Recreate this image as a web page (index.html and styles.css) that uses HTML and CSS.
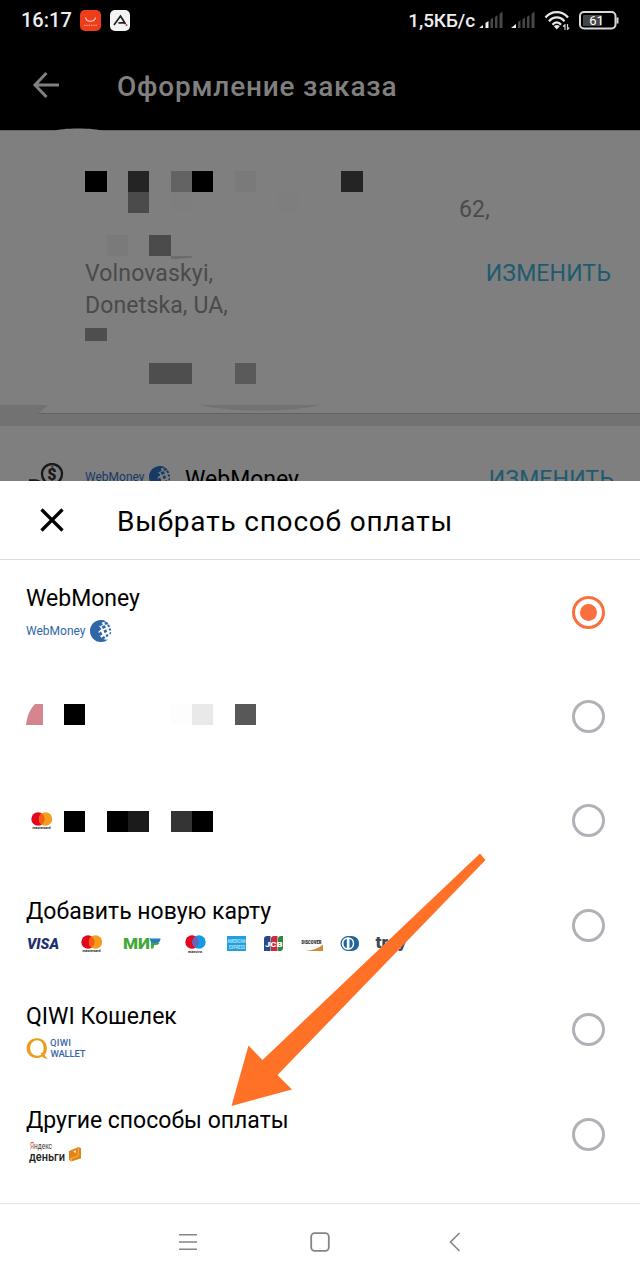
FILE: index.html
```html
<!DOCTYPE html>
<html lang="ru">
<head>
    <meta charset="UTF-8">
    <meta name="viewport" content="width=device-width, initial-scale=1.0">
    <title>Оформление заказа</title>
    <link rel="stylesheet" href="styles.css">
</head>
<body>
    <svg class="defs" width="0" height="0">
        <symbol id="globe" viewBox="0 0 22 22">
            <path d="M11 0C4.500 0 0 5 0 11s4.500 11 11 11c3 0 5-.8 7-2.500-5 1-9.500-3-9.500-9S12 1 17 2C15.500.8 13 0 11 0z" fill="currentColor"/>
            <g fill="currentColor">
                <path d="M11 0l3 .5-2 2-3-.5zM8 4l3-1.500 2 2-3 2zM14 2.500l3-.5 1.500 2-3 1zM6.500 9l3-2.500 2 2.500-3 2.500zM11.500 6.500l3-1.500 1.500 2.500-3 1.500zM17 5l2-.5 1.300 2-2 .7zM8 13.500l3-2 1.500 3-2.500 1.500zM13.500 10.500l2.700-1.200 1 2.700-2.700 1zM18.500 8.700l2-.5.8 2-2 .5zM11.500 17.500l2.500-1.500 1.500 2-2.500 1.500zM15.500 15l2.300-1 .7 2-2 1.200zM19.400 12.500l1.700-.6-.2 2-1.300.6zM8 19l3-.5 3 2.500-5 .5z"/>
            </g>
        </symbol>
        <symbol id="mastercard" viewBox="0 0 22 18">
            <circle cx="7" cy="7" r="6.700" fill="#e3061c"/>
            <circle cx="14.500" cy="7" r="6.700" fill="#f59b1e"/>
            <path d="M10.750 1.500a6.700 6.700 0 0 1 0 11 6.700 6.700 0 0 1 0-11z" fill="#f2600f"/>
            <text x="1.500" y="17" font-size="3.600" font-weight="700" textLength="18" fill="#222">mastercard</text>
        </symbol>
    </svg>

    <div class="status-bar">
        <span class="time">16:17</span>
        <svg class="app-icon" width="21" height="21" viewBox="0 0 21 21">
            <rect width="21" height="21" rx="5" fill="#ee3d1b"/>
            <path d="M5.500 7.500c1 5 9 5 10 0" fill="none" stroke="#ffd9ca" stroke-width="1.200"/>
            <path d="M4 15.300h13" stroke="#ffb49d" stroke-width="1" stroke-dasharray="1.500 .8"/>
        </svg>
        <svg class="app-icon" width="20" height="21" viewBox="0 0 20 21">
            <rect width="20" height="21" rx="5" fill="#f4f4f4"/>
            <path d="M4 15L10.500 6 15.500 14M8.500 12.800h6" fill="none" stroke="#222" stroke-width="1.700"/>
            <circle cx="16.500" cy="15" r="1" fill="#e33"/>
        </svg>
        <span class="speed">1,5КБ/с</span>
        <svg class="signal" width="24" height="18" viewBox="0 0 24 18">
            <path d="M0 17l4-3v3zM6.500 17v-5l3-2v7z" fill="#eee"/>
            <path d="M11.500 17V8.500l2.500-2V17zM16 17V6l2.500-2v13zM20.500 17V3L23.500.5V17z" fill="#474747"/>
        </svg>
        <svg class="signal" width="24" height="18" viewBox="0 0 24 18">
            <path d="M0 17l5-4v4z" fill="#eee"/>
            <path d="M7 17v-6l2.500-2v8zM11.500 17V8.500l2.500-2V17zM16 17V6l2.500-2v13zM20.500 17V3L23.500.5V17z" fill="#474747"/>
        </svg>
        <svg class="wifi" width="26" height="21" viewBox="0 0 26 21">
            <path d="M1.500 7.500c6-7.300 16.500-7.300 22.500 0M5 11.200c4.500-5 11-5 15.500 0M8.500 14.700c2.500-3 6-3 8.500 0" fill="none" stroke="#e8e8e8" stroke-width="2.300"/>
            <path d="M9.800 16.200c2-1.700 4-1.700 6 0l-3 3.300z" fill="#e8e8e8"/>
            <path d="M21 14v6M19 16.500l2-2M23.500 14v6M23.500 19.500l1.700-2" stroke="#ccc" stroke-width="1.200" fill="none"/>
        </svg>
        <svg class="battery" width="40" height="19" viewBox="0 0 40 19">
            <rect x="1" y="1" width="35.500" height="16.500" rx="4" fill="none" stroke="#d8d8d8" stroke-width="2"/>
            <rect x="4" y="4" width="19" height="11" rx="1" fill="#454545"/>
            <path d="M38.500 6.500v6" stroke="#d8d8d8" stroke-width="2"/>
            <text x="17.500" y="14" font-size="13" font-weight="400" text-anchor="middle" fill="#fff">61</text>
        </svg>
    </div>

    <div class="header">
        <svg class="back" width="28" height="28" viewBox="0 0 28 28">
            <path d="M14.500 2L3 14l11.500 12M3 14h24" fill="none" stroke="#808080" stroke-width="3"/>
        </svg>
        <h1>Оформление заказа</h1>
    </div>

    <div class="checkout">
        <div class="address">
            <div class="address-text">
                <p class="house">62,</p>
                <p class="street">Volnovaskyi,</p>
                <p>Donetska, UA,</p>
            </div>
            <a class="change">ИЗМЕНИТЬ</a>
        </div>
        <div class="payment">
            <svg class="money" width="36" height="34" viewBox="0 0 36 34">
                <circle cx="24" cy="11" r="10" fill="none" stroke="#1a1a1a" stroke-width="2.300"/>
                <text x="24" y="16.500" font-size="16" font-weight="900" text-anchor="middle" fill="#1a1a1a">$</text>
                <path d="M1 17.500h7c3 0 4 3 8 3h5" fill="none" stroke="#1a1a1a" stroke-width="2.500"/>
            </svg>
            <div class="webmoney dim"><span>WebMoney</span><svg width="22" height="22"><use href="#globe"/></svg></div>
            <span class="payment-name">WebMoney</span>
            <a class="change">ИЗМЕНИТЬ</a>
        </div>
        <!-- hidden personal data -->
        <svg class="mask" width="640" height="355" viewBox="0 126 640 355">
            <path d="M54 131c6-3.500 42-3.500 49 0z" fill="#7f7f7f"/>
            <path d="M0 405h48l-10 9v12H0zM200 405h120c-25 7-90 8-120 0z" fill="#727272"/>
            <g shape-rendering="crispEdges">
                <path d="M85 171h22v21h-22zM192 171h21v21h-21z" fill="#000"/>
                <path d="M128 171h21v21h-21zM341 171h22v21h-22z" fill="#242424"/>
                <path d="M171 171h21v21h-21z" fill="#636363"/>
                <path d="M235 171h21v21h-21zM107 235h21v21h-21z" fill="#7a7a7a"/>
                <path d="M171 192h21v19h-21zM277 192h22v20h-22z" fill="#7e7e7e"/>
                <path d="M128 192h21v21h-21zM149 235h22v21h-22z" fill="#4b4b4b"/>
                <path d="M85 328h22v13H85zM149 363h43v21h-43z" fill="#4e4e4e"/>
                <path d="M235 363h21v21h-21z" fill="#5a5a5a"/>
            </g>
            <path d="M171 256h21v1.500l-15 1.500h-6z" fill="#6c6c6c"/>
        </svg>
    </div>

    <div class="sheet">
        <div class="sheet-header">
            <svg class="close" width="24" height="24" viewBox="0 0 24 24">
                <path d="M1.500 1.500l21 21M22.500 1.500l-21 21" stroke="#000" stroke-width="3.200"/>
            </svg>
            <h2>Выбрать способ оплаты</h2>
        </div>

        <div class="options">
            <div class="option">
                <div class="info">
                    <h3>WebMoney</h3>
                    <div class="webmoney"><span>WebMoney</span><svg width="22" height="22"><use href="#globe"/></svg></div>
                </div>
                <span class="radio checked"></span>
            </div>

            <div class="option">
                <svg class="hidden-card" width="240" height="22" viewBox="0 0 240 22">
                    <path d="M0 21C1 12 4 5 9 0h8v21z" fill="#d4858e"/>
                    <g shape-rendering="crispEdges">
                        <path d="M38 0h21v21H38z" fill="#000"/>
                        <path d="M145 0h21v20h-21z" fill="#fdfdfd"/>
                        <path d="M166 0h21v21h-21z" fill="#e9e9e9"/>
                        <path d="M209 0h21v21h-21z" fill="#585858"/>
                    </g>
                </svg>
                <span class="radio"></span>
            </div>

            <div class="option">
                <svg class="hidden-card second" width="240" height="22" viewBox="0 0 240 22">
                    <use href="#mastercard" x="5" y="1" width="22" height="18"/>
                    <g shape-rendering="crispEdges">
                        <path d="M38 0h21v21H38zM81 0h21v21H81zM166 0h21v21h-21z" fill="#000"/>
                        <path d="M102 0h21v21h-21z" fill="#1b1b1b"/>
                        <path d="M145 0h21v21h-21z" fill="#343434"/>
                    </g>
                </svg>
                <span class="radio"></span>
            </div>

            <div class="option">
                <div class="info">
                    <h3>Добавить новую карту</h3>
                    <svg class="cards" width="384" height="22" viewBox="0 0 384 22">
                        <text x="1" y="15.500" font-size="14" font-weight="900" font-style="italic" textLength="32" lengthAdjust="spacingAndGlyphs" fill="#1c2f6e">VISA</text>
                        <use href="#mastercard" x="55" y="2" width="22" height="18"/>
                        <text x="97" y="15.500" font-size="14" font-weight="900" textLength="27" lengthAdjust="spacingAndGlyphs" fill="#43a838">МИ</text>
                        <path d="M125 15.500v-6h3.500l-1 6z" fill="#43a838"/>
                        <path d="M123.500 5.500h11c0 3-2 5-5 5h-4z" fill="#277dba"/>
                        <path d="M125 10h8.500c-1 1.500-2 2-4 2H125z" fill="#43a838"/>
                        <circle cx="166" cy="9" r="6.700" fill="#e3061c"/>
                        <circle cx="173" cy="9" r="6.700" fill="#149be0"/>
                        <path d="M169.500 3.300a6.700 6.700 0 0 1 0 11.400 6.700 6.700 0 0 1 0-11.400z" fill="#6864bb"/>
                        <text x="162" y="19.500" font-size="3.600" font-weight="700" textLength="14" fill="#222">maestro</text>
                        <rect x="201" y="3" width="19" height="15" fill="#20a0de"/>
                        <text x="201.500" y="10" font-size="5.200" font-weight="700" textLength="18" lengthAdjust="spacingAndGlyphs" fill="#b7e2f7">AMERICAN</text>
                        <text x="203" y="15.500" font-size="5.200" font-weight="700" textLength="16" lengthAdjust="spacingAndGlyphs" fill="#b7e2f7">EXPRESS</text>
                        <path d="M241 3h3.500v15H238V6q0-3 3-3z" fill="#284a86"/>
                        <path d="M248 3h3.500v15H245V6q0-3 3-3z" fill="#c92a3e"/>
                        <path d="M255 3h2v12q0 3-3 3h-2V6q0-3 3-3z" fill="#2d8544"/>
                        <text x="239" y="13.500" font-size="8" font-weight="900" textLength="17.500" lengthAdjust="spacingAndGlyphs" fill="#fff">JCB</text>
                        <path d="M276 3.500h20V17h-20z" fill="#fafafa"/>
                        <path d="M297 11.500V18h-18q12-1 18-6.500z" fill="#d18a35"/>
                        <text x="275.500" y="11" font-size="5" font-weight="900" textLength="20" lengthAdjust="spacingAndGlyphs" fill="#222">DISCOVER</text>
                        <path d="M322 3h3.500c10 0 10 15 0 15H322z" fill="#1d649c"/>
                        <circle cx="322" cy="10.500" r="6.900" fill="#fff" stroke="#1d649c" stroke-width="1.200"/>
                        <path d="M320.800 5.800v9.400a5 5 0 0 1 0-9.400zM323.500 5.800v9.400a5 5 0 0 0 0-9.400z" fill="#1d649c"/>
                        <text x="349.500" y="15" font-size="17" font-weight="900" textLength="31" lengthAdjust="spacingAndGlyphs" fill="#3c4a58">troy</text>
                    </svg>
                </div>
                <span class="radio"></span>
            </div>

            <div class="option">
                <div class="info">
                    <h3>QIWI Кошелек</h3>
                    <svg width="62" height="22" viewBox="0 0 62 22">
                        <path d="M11 .3C4.500.3.600 5 .6 10.300.6 16 5 20 10.500 20c2 0 4-.5 5.500-1.500 2 1.600 4 2.500 6 2.300-1.200-.8-2.500-2-3.300-3.800 1.500-1.800 2.200-4 2.200-6.700C20.900 4.500 17 .3 11 .3zM11.500 2.300c4 0 6 3.700 6 8 0 2-.4 3.500-1.200 4.700-1.300-.6-2-.2-1.500.8l.6.8c-1 .8-2.200 1.200-3.800 1.200-4.500 0-7.400-3-7.400-7.500 0-4.700 3-8 7.300-8z" fill="#eb9e1d" fill-rule="evenodd"/>
                        <text x="24" y="8" font-size="9.500" font-weight="500" textLength="21" fill="#3d67a8">QIWI</text>
                        <text x="24.500" y="18.500" font-size="9.500" font-weight="500" textLength="35" fill="#3d67a8">WALLET</text>
                    </svg>
                </div>
                <span class="radio"></span>
            </div>

            <div class="option">
                <div class="info">
                    <h3>Другие способы оплаты</h3>
                    <svg width="62" height="22" viewBox="0 0 62 22">
                        <text x="4" y="7" font-size="9" textLength="22" lengthAdjust="spacingAndGlyphs" fill="#333"><tspan fill="#d8432e">Я</tspan>ндекс</text>
                        <text x="3" y="18.500" font-size="13.500" font-weight="500" textLength="36" lengthAdjust="spacingAndGlyphs" fill="#222">деньги</text>
                        <path d="M43 9l9.500-4 2.500 1v10.500l-10 3-2-2z" fill="#e28416"/>
                        <path d="M43.500 17l8.500-3 .5-8M45.500 19V17" fill="none" stroke="#f6bd64" stroke-width=".8"/>
                        <path d="M47 9.500l3-1.500v3z" fill="#fbe3bb"/>
                    </svg>
                </div>
                <span class="radio"></span>
            </div>
        </div>
    </div>

    <div class="navbar">
        <svg width="18" height="18" viewBox="0 0 18 18"><path d="M0 1.700h18M0 9h18M0 16.200h18" stroke="#858585" stroke-width="1.600"/></svg>
        <svg width="20" height="20" viewBox="0 0 20 20"><rect x="1.200" y="1.200" width="17.600" height="17.600" rx="3.500" fill="none" stroke="#858585" stroke-width="1.800"/></svg>
        <svg class="nav-back" width="12" height="20" viewBox="0 0 12 20"><path d="M10.500 1L1.500 10l9 9" fill="none" stroke="#858585" stroke-width="1.600"/></svg>
    </div>

    <svg class="arrow" width="256" height="254" viewBox="231 853 256 254">
        <path d="M480 853.500L485.500 860 277.500 1075 292 1089.500 231.500 1106 248.500 1045.500 262.500 1060z" fill="#ff7126"/>
    </svg>
</body>
</html>
```

FILE: styles.css
```css
:root {
    --dim-bg: #7f7f7f;
    --accent: #f9703e;
    --link: #1d5b70;
}

* {
    box-sizing: border-box;
}

body {
    margin: 0;
    width: 640px;
    height: 1280px;
    display: flex;
    flex-direction: column;
    position: relative;
    overflow: hidden;
    background: #fff;
    font-family: Roboto, sans-serif;
    color: #000;
}

h1, h2, h3, p {
    margin: 0;
    font-weight: 400;
    white-space: nowrap;
}

svg {
    display: block;
    flex: none;
}

.defs {
    position: absolute;
}

.status-bar {
    height: 40px;
    display: flex;
    align-items: center;
    padding: 0 21px;
    background: #000;
    color: #eee;
    font-size: 20px;
    font-weight: 500;
}

.time {
    width: 59px;
}

.app-icon {
    margin-right: 9px;
}

.speed {
    margin-left: auto;
    margin-right: 4px;
    font-size: 19px;
    letter-spacing: -0.1px;
}

.signal {
    margin-right: 8px;
}

.wifi {
    margin: 0 9px 0 1px;
}

.header {
    height: 90px;
    display: flex;
    align-items: center;
    padding-left: 32px;
    background: #000;
    color: #808080;
}

.header h1 {
    margin-left: 57px;
    margin-top: 2px;
    font-size: 28px;
    font-weight: 500;
    letter-spacing: 0.8px;
}

.checkout {
    height: 351px;
    position: relative;
    background: #727272;
}

.address {
    height: 284px;
    display: flex;
    justify-content: space-between;
    align-items: flex-start;
    padding: 63px 29px 0 85px;
    background: var(--dim-bg);
    border-top: 1px solid #666;
    border-bottom: 1px solid #626262;
    font-size: 23px;
    line-height: 32px;
    letter-spacing: 0.15px;
    color: #4a4a4a;
}

.house {
    width: 0;
    margin-left: 374px;
}

.street {
    margin-top: 32px;
}

.change {
    color: var(--link);
    font-size: 23px;
    letter-spacing: 0.15px;
}

.address .change {
    margin-top: 64px;
}

.payment {
    height: 55px;
    margin-top: 12px;
    display: flex;
    align-items: flex-start;
    overflow: hidden;
    padding: 37px 26px 0 28px;
    background: var(--dim-bg);
    line-height: 34px;
    font-size: 23px;
}

.payment .webmoney {
    margin: 3px 14px 0 21px;
}

.payment .change {
    margin-left: auto;
}

.mask {
    position: absolute;
    left: 0;
    top: -4px;
}

.webmoney {
    display: flex;
    align-items: center;
    gap: 4px;
    height: 22px;
    color: #2f67a9;
    font-size: 12px;
}

.webmoney span {
    width: 60px;
}

.webmoney.dim {
    color: #173a66;
}

.sheet {
    height: 722px;
    background: #fff;
}

.sheet-header {
    height: 79px;
    display: flex;
    align-items: center;
    padding-left: 40px;
    border-bottom: 1px solid #dedede;
}

.sheet-header h2 {
    margin-left: 53px;
    margin-top: 2px;
    font-size: 28px;
    letter-spacing: 0.8px;
}

.option {
    height: 104.4px;
    display: flex;
    align-items: center;
    justify-content: space-between;
    padding: 0 35.5px 0 26px;
}

.info {
    display: flex;
    flex-direction: column;
    gap: 7px;
    margin-top: 3px;
}

.info h3 {
    font-size: 23px;
    line-height: 28px;
}

.hidden-card {
    margin-top: -3px;
}

.hidden-card.second {
    margin-top: 2px;
}

.radio {
    width: 33px;
    height: 33px;
    border: 3.5px solid #b1b2b7;
    border-radius: 50%;
}

.radio.checked {
    display: flex;
    align-items: center;
    justify-content: center;
    border-color: var(--accent);
}

.radio.checked::after {
    content: "";
    width: 17px;
    height: 17px;
    border-radius: 50%;
    background: var(--accent);
}

.navbar {
    height: 77px;
    display: flex;
    align-items: center;
    gap: 113px;
    padding-left: 179px;
    border-top: 1px solid #e6e6e6;
}

.nav-back {
    margin-left: 6px;
}

/* pointer drawn over the list */
.arrow {
    position: absolute;
    left: 231px;
    top: 853px;
}
```
